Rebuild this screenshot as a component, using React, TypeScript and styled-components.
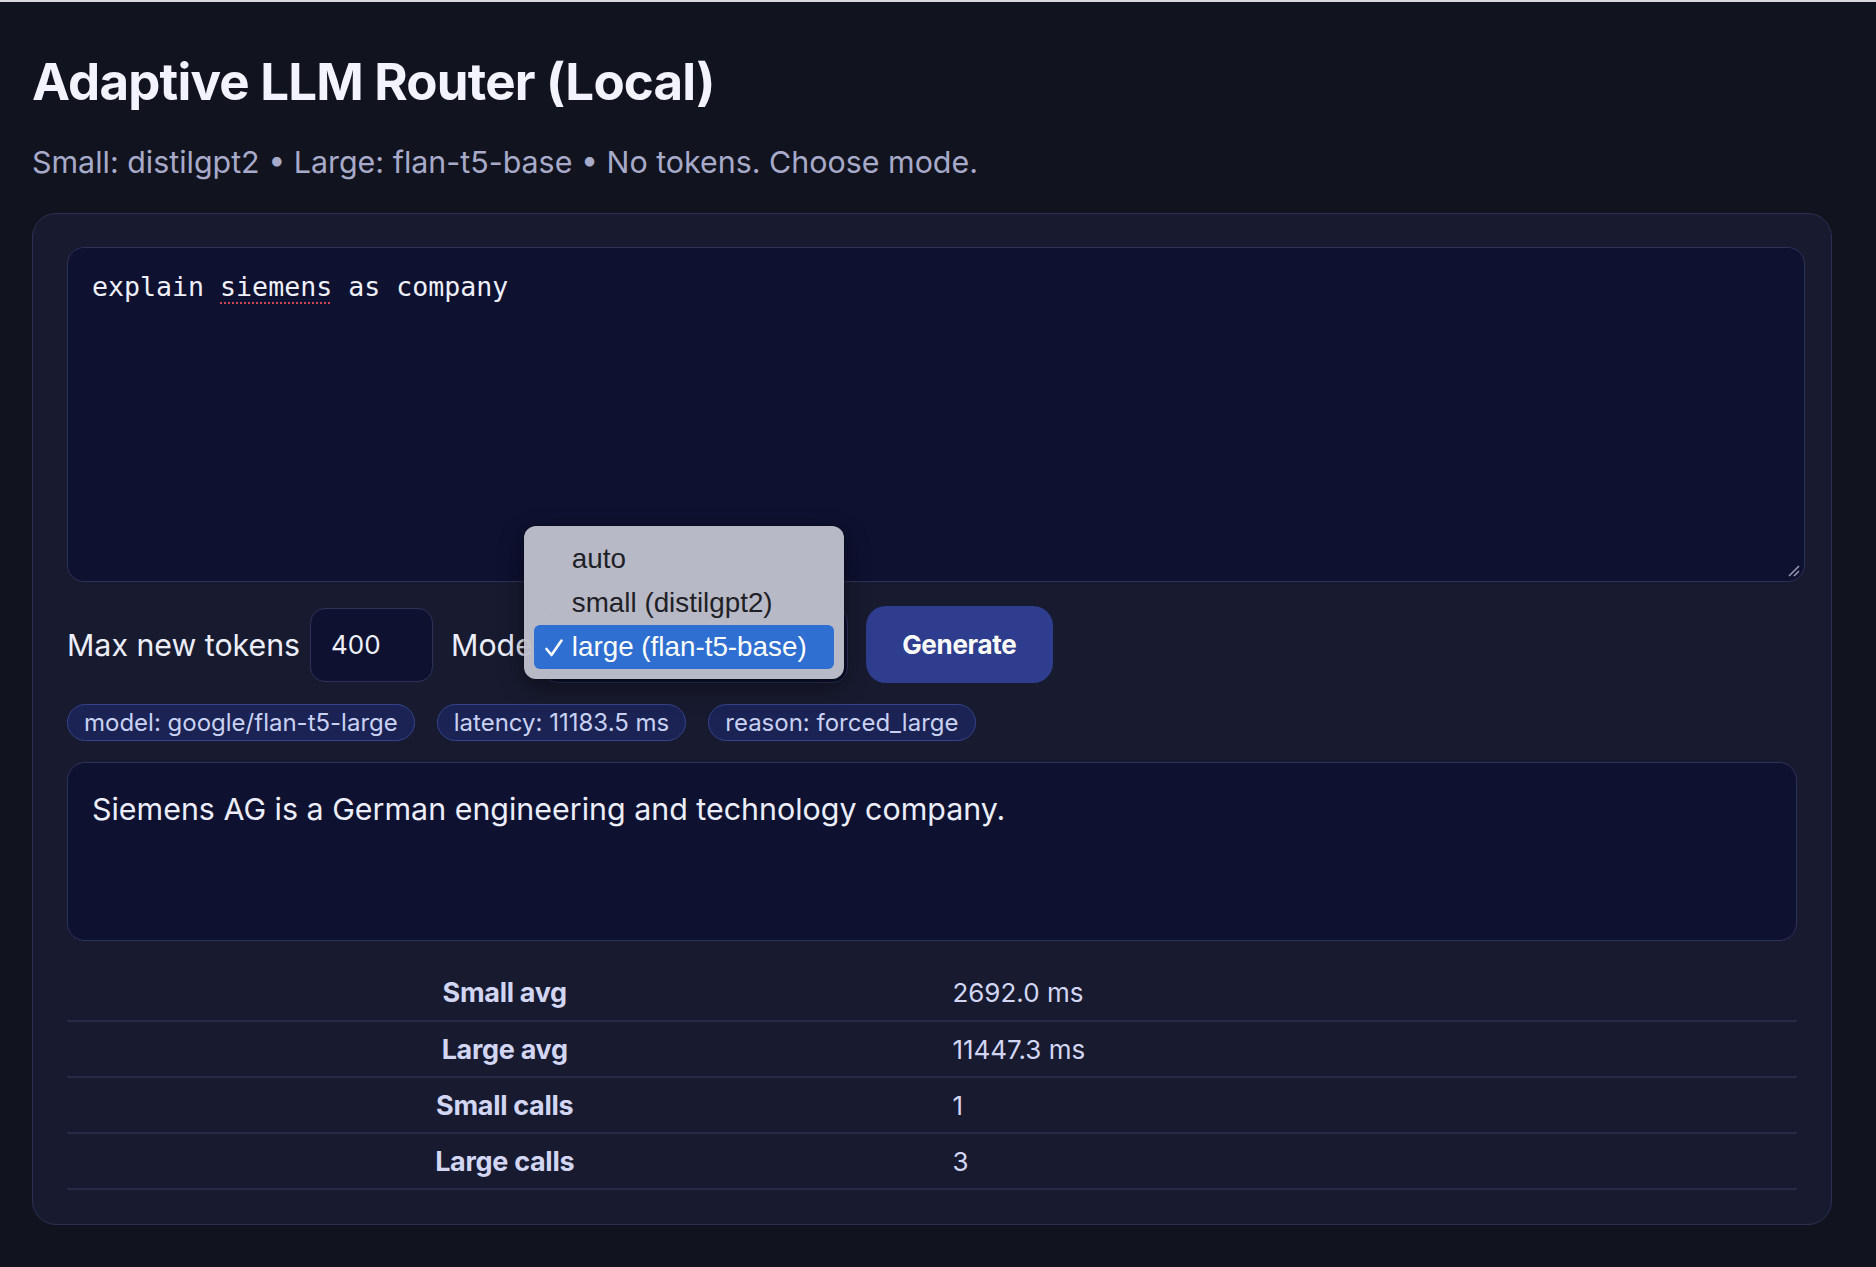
import React from "react";
import styled, { createGlobalStyle } from "styled-components";

const GlobalStyle = createGlobalStyle`
  html, body {
    margin: 0;
    padding: 0;
    background: #11131f;
  }
  body {
    font-family: Inter, "Noto Sans", "Liberation Sans", sans-serif;
    color: #eceefb;
    border-top: 2px solid #d9dae0;
  }
  * { box-sizing: border-box; }
`;

const Page = styled.main`
  padding: 46px 44px 40px 32px;
`;

const Title = styled.h1`
  margin: 0;
  font-size: 51px;
  line-height: 68px;
  font-weight: 700;
  letter-spacing: -0.8px;
  color: #f2f3fc;
`;

const Subtitle = styled.p`
  margin: 26px 0 31px;
  font-size: 30.4px;
  line-height: 40px;
  color: #a7aac9;
`;

const Card = styled.section`
  width: 1800px;
  background: #181b30;
  border: 1px solid #2c2f52;
  border-radius: 24px;
  padding: 33px 34px 34px;
  display: flex;
  flex-direction: column;
`;

const PromptBox = styled.div`
  position: relative;
  width: calc(100% + 8px);
  height: 335px;
  background: #0e1130;
  border: 1px solid #2e3259;
  border-radius: 17px;
  padding: 19px 24px;
  font-family: "DejaVu Sans Mono", "Liberation Mono", monospace;
  font-size: 26.6px;
  line-height: 40px;
  color: #eef0fa;
  white-space: pre-wrap;
`;

const Misspelled = styled.span`
  text-decoration: underline dotted #d0454f;
  text-decoration-thickness: 2px;
  text-underline-offset: 6px;
`;

const Grip = styled.svg`
  position: absolute;
  right: 4px;
  bottom: 4px;
`;

const Controls = styled.div`
  display: flex;
  align-items: center;
  gap: 18px;
  margin-top: 24px;
`;

const Field = styled.label`
  display: flex;
  align-items: center;
  gap: 10px;
  font-size: 30.3px;
  color: #eceefb;
`;

const NumberBox = styled.div`
  width: 123px;
  height: 74px;
  background: #0e1130;
  border: 1px solid #2e3259;
  border-radius: 15px;
  padding: 0 20px;
  display: flex;
  align-items: center;
  font-size: 26px;
  color: #eef0fa;
`;

const SelectWrap = styled.div`
  position: relative;
`;

const SelectBox = styled.div`
  width: 305px;
  height: 76px;
  background: #0e1130;
  border: 1px solid #2e3259;
  border-radius: 15px;
`;

const Menu = styled.ul`
  position: absolute;
  left: -19px;
  top: -81px;
  width: 320px;
  margin: 0;
  padding: 11px 10px 10px;
  list-style: none;
  background: rgba(190, 191, 203, 0.97);
  border-radius: 12px;
  box-shadow: 0 8px 24px rgba(0, 0, 0, 0.45), 0 0 0 1px rgba(0, 0, 0, 0.15);
  font-family: "Liberation Sans", Inter, sans-serif;
  font-size: 27.8px;
`;

const MenuItem = styled.li<{ $active?: boolean }>`
  position: relative;
  height: 44px;
  display: flex;
  align-items: center;
  padding-left: 38px;
  border-radius: 6px;
  color: ${(p) => (p.$active ? "#ffffff" : "#1f1f26")};
  background: ${(p) => (p.$active ? "#2f6fd2" : "transparent")};
`;

const Check = styled.svg`
  position: absolute;
  left: 10px;
  top: 13px;
`;

const GenerateButton = styled.button`
  width: 187px;
  height: 77px;
  border: none;
  border-radius: 20px;
  background: #2f3d8e;
  color: #ffffff;
  font-family: inherit;
  font-size: 26px;
  font-weight: 700;
  letter-spacing: -0.3px;
`;

const Chips = styled.div`
  display: flex;
  gap: 22px;
  margin-top: 21px;
`;

const Chip = styled.span`
  height: 37px;
  display: inline-flex;
  align-items: center;
  padding: 0 16px;
  border-radius: 999px;
  background: #1a2354;
  border: 1px solid #35448c;
  color: #c9d1f3;
  font-size: 24px;
`;

const Output = styled.div`
  margin-top: 21px;
  min-height: 179px;
  background: #0e1130;
  border: 1px solid #2e3259;
  border-radius: 18px;
  padding: 24px 24px;
  font-size: 30.4px;
  line-height: 44px;
  color: #eceefb;
`;

const Stats = styled.table`
  margin-top: 24px;
  width: 100%;
  border-collapse: collapse;
  font-size: 26px;
`;

const Row = styled.tr`
  border-bottom: 2px solid #272b4a;
`;

const Head = styled.th`
  width: 50.6%;
  height: 56px;
  padding: 0 10px;
  text-align: center;
  font-size: 27px;
  font-weight: 700;
  color: #d2d6f3;
  letter-spacing: -0.3px;
`;

const Value = styled.td`
  height: 56px;
  padding: 0 10px;
  text-align: left;
  color: #d2d6f3;
`;

const stats: [string, string][] = [
  ["Small avg", "2692.0 ms"],
  ["Large avg", "11447.3 ms"],
  ["Small calls", "1"],
  ["Large calls", "3"],
];

export default function App() {
  return (
    <>
      <GlobalStyle />
      <Page>
        <Title>Adaptive LLM Router (Local)</Title>
        <Subtitle>
          Small: distilgpt2 • Large: flan-t5-base • No tokens. Choose mode.
        </Subtitle>
        <Card>
          <PromptBox role="textbox">
            explain <Misspelled>siemens</Misspelled> as company
            <Grip width="14" height="14" viewBox="0 0 14 14">
              <path d="M3 13 L13 3 M8 13 L13 8" stroke="#9a9cb0" strokeWidth="1.5" />
            </Grip>
          </PromptBox>
          <Controls>
            <Field>
              Max new tokens
              <NumberBox>400</NumberBox>
            </Field>
            <Field>
              Mode
              <SelectWrap>
                <SelectBox />
                <Menu>
                  <MenuItem>auto</MenuItem>
                  <MenuItem>small (distilgpt2)</MenuItem>
                  <MenuItem $active>
                    <Check width="20" height="20" viewBox="0 0 20 20">
                      <path
                        d="M2.5 11 L7.5 17 L17.5 2.5"
                        fill="none"
                        stroke="#ffffff"
                        strokeWidth="2.6"
                        strokeLinecap="round"
                        strokeLinejoin="round"
                      />
                    </Check>
                    large (flan-t5-base)
                  </MenuItem>
                </Menu>
              </SelectWrap>
            </Field>
            <GenerateButton>Generate</GenerateButton>
          </Controls>
          <Chips>
            <Chip>model: google/flan-t5-large</Chip>
            <Chip>latency: 11183.5 ms</Chip>
            <Chip>reason: forced_large</Chip>
          </Chips>
          <Output>Siemens AG is a German engineering and technology company.</Output>
          <Stats>
            <tbody>
              {stats.map(([k, v]) => (
                <Row key={k}>
                  <Head>{k}</Head>
                  <Value>{v}</Value>
                </Row>
              ))}
            </tbody>
          </Stats>
        </Card>
      </Page>
    </>
  );
}
